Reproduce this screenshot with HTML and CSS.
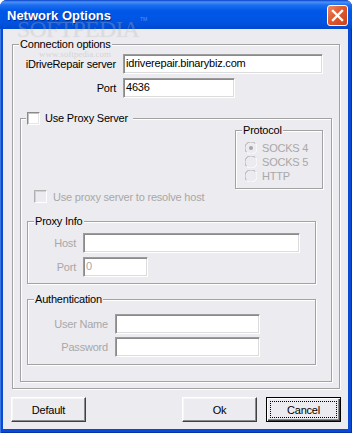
FILE: index.html
```html
<!DOCTYPE html>
<html lang="en">
<head>
  <meta charset="UTF-8">
  <title>Network Options</title>
  <link rel="stylesheet" href="styles.css">
</head>
<body>

  <div class="window">
    <!-- Title bar -->
    <div class="titlebar">
      <span class="title">Network Options</span>
      <span class="close-btn">
        <svg width="19" height="19" viewBox="0 0 19 19">
          <path d="M5 5 L14 14 M14 5 L5 14" stroke="#fff" stroke-width="2.4" stroke-linecap="square"/>
        </svg>
      </span>
    </div>

    <div class="client">
      <div class="group conn">
        <div class="group-title">Connection options</div>
        <div class="row server-row">
          <span class="lbl conn-lbl">iDriveRepair server</span>
          <div class="field server-field">idriverepair.binarybiz.com</div>
        </div>
        <div class="row port-row">
          <span class="lbl conn-lbl">Port</span>
          <div class="field port-field">4636</div>
        </div>

        <div class="group proxy">
          <div class="group-title proxy-title">
            <span class="check"></span>
            <span>Use Proxy Server</span>
          </div>

          <div class="group protocol">
            <div class="group-title">Protocol</div>
            <div class="radio-list">
              <div class="radio-row">
                <svg class="radio" width="12" height="12" viewBox="0 0 12 12">
                  <circle cx="6" cy="6" r="5.5" fill="#ecebef"/>
                  <path d="M1.6 10.4 A6 6 0 0 1 10.4 1.6" stroke="#a6a6a6" fill="none"/>
                  <path d="M10.4 1.6 A6 6 0 0 1 1.6 10.4" stroke="#fff" fill="none"/>
                  <circle cx="6" cy="6" r="2" fill="#a6a6a6"/>
                </svg>
                <span>SOCKS 4</span>
              </div>
              <div class="radio-row">
                <svg class="radio" width="12" height="12" viewBox="0 0 12 12">
                  <circle cx="6" cy="6" r="5.5" fill="#ecebef"/>
                  <path d="M1.6 10.4 A6 6 0 0 1 10.4 1.6" stroke="#a6a6a6" fill="none"/>
                  <path d="M10.4 1.6 A6 6 0 0 1 1.6 10.4" stroke="#fff" fill="none"/>
                </svg>
                <span>SOCKS 5</span>
              </div>
              <div class="radio-row">
                <svg class="radio" width="12" height="12" viewBox="0 0 12 12">
                  <circle cx="6" cy="6" r="5.5" fill="#ecebef"/>
                  <path d="M1.6 10.4 A6 6 0 0 1 10.4 1.6" stroke="#a6a6a6" fill="none"/>
                  <path d="M10.4 1.6 A6 6 0 0 1 1.6 10.4" stroke="#fff" fill="none"/>
                </svg>
                <span>HTTP</span>
              </div>
            </div>
          </div>

          <div class="resolve-row">
            <span class="check disabled"></span>
            <span class="dim">Use proxy server to resolve host</span>
          </div>

          <div class="group info">
            <div class="group-title">Proxy Info</div>
            <div class="row host-row">
              <span class="lbl info-lbl dim">Host</span>
              <div class="field host-field"></div>
            </div>
            <div class="row pport-row">
              <span class="lbl info-lbl dim">Port</span>
              <div class="field pport-field dim">0</div>
            </div>
          </div>

          <div class="group auth">
            <div class="group-title">Authentication</div>
            <div class="row user-row">
              <span class="lbl auth-lbl dim">User Name</span>
              <div class="field auth-field"></div>
            </div>
            <div class="row pass-row">
              <span class="lbl auth-lbl dim">Password</span>
              <div class="field auth-field"></div>
            </div>
          </div>
        </div>
      </div>

      <div class="buttons">
        <div class="btn">Default</div>
        <div class="btn ok-btn">Ok</div>
        <div class="btn cancel-btn"><span class="focus-rect">Cancel</span></div>
      </div>
    </div>

    <!-- watermark over the dialog -->
    <span class="wm-logo">SOFTPEDIA</span>
    <span class="wm-tm">TM</span>
    <span class="wm-url">www.softpedia.com</span>
  </div>

</body>
</html>
```

FILE: styles.css
```css
* {
  box-sizing: border-box;
  margin: 0;
  padding: 0;
}

body {
  width: 352px;
  height: 433px;
  overflow: hidden;
  background: #fff;
  font-family: "Liberation Sans", Arial, sans-serif;
  font-size: 11px;
  letter-spacing: -0.2px;
  color: #000;
}

.window {
  position: relative;
  width: 352px;
  height: 433px;
  background: #0a49d4;
  border-radius: 7px 7px 0 0;
  box-shadow: inset 1px 0 0 #3a78e4, inset -1px 0 0 #0732a8, inset 0 -1px 0 #0732a8;
}

/* Title bar */
.titlebar {
  height: 29px;
  display: flex;
  align-items: center;
  padding: 2px 4px 0 7px;
  border-radius: 7px 7px 0 0;
  background: linear-gradient(to bottom, #0a3fc8 0, #4a93f6 2px, #1d6ef0 5px, #0058e8 11px, #0054e2 22px, #0049d0 29px);
}

.title {
  flex: 1;
  color: #fff;
  font-weight: bold;
  font-size: 13px;
  letter-spacing: 0;
  text-shadow: 1px 1px 0 #0a2a8e;
}

.close-btn {
  width: 21px;
  height: 21px;
  margin-top: -1px;
  display: flex;
  align-items: center;
  justify-content: center;
  border: 1px solid #fff;
  border-radius: 3px;
  background: linear-gradient(135deg, #f08a62 0%, #e0582e 45%, #c8441c 100%);
}

/* Client area */
.client {
  margin: 0 4px 0 3px;
  height: 400px;
  background: #ecebef;
  padding: 15px 8px 0 9px;
}

.group {
  border: 1px solid #a2a2a2;
  box-shadow: inset 1px 1px 0 #fff, 1px 1px 0 #fff;
}

.group-title {
  width: fit-content;
  height: 13px;
  line-height: 13px;
  margin: -7px 0 0 6px;
  padding: 0 1px;
  background: #ecebef;
}

.dim {
  color: #a8a8a8;
}

.row {
  display: flex;
  align-items: center;
  height: 20px;
}

.lbl {
  text-align: right;
  margin-right: 7px;
  white-space: nowrap;
}

.field {
  height: 20px;
  line-height: 17px;
  padding: 0 2px;
  background: #fff;
  border: 1px solid;
  border-color: #9c9c9c #fff #fff #9c9c9c;
  box-shadow: inset 1px 1px 0 #8a8a8a, inset -1px -1px 0 #dcdcdc;
  white-space: nowrap;
}

/* Connection options */
.conn {
  height: 345px;
}

.conn-lbl {
  width: 103px;
}

.server-row {
  margin-top: 3px;
}

.server-field {
  width: 200px;
}

.port-row {
  margin-top: 4px;
}

.port-field {
  width: 112px;
}

/* Use Proxy Server */
.proxy {
  width: 312px;
  height: 264px;
  margin: 20px 0 0 7px;
}

.proxy-title {
  display: flex;
  align-items: center;
  gap: 5px;
  margin-left: 5px;
  padding: 0 5px 0 1px;
}

.check {
  width: 13px;
  height: 13px;
  background: #fff;
  border: 1px solid;
  border-color: #8a8a8a #fff #fff #8a8a8a;
  box-shadow: inset 1px 1px 0 #c4c4c4, inset -1px -1px 0 #e6e6e6;
}

.check.disabled {
  background: #ecebef;
  border-color: #b0b0b0 #fff #fff #b0b0b0;
  box-shadow: inset 1px 1px 0 #d2d2d2;
}

.protocol {
  width: 88px;
  height: 59px;
  margin: 5px 8px 0 auto;
}

.radio-list {
  padding-top: 4px;
}

.radio-row {
  display: flex;
  align-items: center;
  gap: 5px;
  height: 14px;
  padding-left: 9px;
  color: #a8a8a8;
}

.resolve-row {
  display: flex;
  align-items: center;
  gap: 6px;
  height: 13px;
  margin: 1px 0 0 13px;
}

/* Proxy Info */
.info {
  width: 289px;
  height: 63px;
  margin: 18px 0 0 6px;
}

.info-lbl {
  width: 48px;
}

.host-row {
  margin-top: 5px;
}

.host-field {
  width: 217px;
}

.pport-row {
  margin-top: 4px;
}

.pport-field {
  width: 65px;
}

/* Authentication */
.auth {
  width: 289px;
  height: 66px;
  margin: 15px 0 0 6px;
}

.auth-lbl {
  width: 80px;
}

.user-row {
  margin-top: 8px;
}

.pass-row {
  margin-top: 3px;
}

.auth-field {
  width: 145px;
}

/* Buttons */
.buttons {
  display: flex;
  margin: 8px -1px 0 -1px;
}

.btn {
  width: 75px;
  height: 25px;
  display: flex;
  align-items: center;
  justify-content: center;
  background: #ecebef;
  border: 1px solid;
  border-color: #fff #404040 #404040 #fff;
  box-shadow: inset -1px -1px 0 #8c8c8c, inset 1px 1px 0 #f6f6f6;
}

.ok-btn {
  margin-left: auto;
}

.cancel-btn {
  margin-left: 9px;
  border-color: #000;
  box-shadow: inset 1px 1px 0 #fff, inset -1px -1px 0 #404040, inset -2px -2px 0 #8c8c8c;
}

.focus-rect {
  width: 67px;
  height: 17px;
  display: flex;
  align-items: center;
  justify-content: center;
  border: 1px dotted #000;
}

/* Watermark */
.wm-logo {
  position: absolute;
  left: 17px;
  top: 21px;
  font-family: "Liberation Serif", serif;
  font-size: 24px;
  line-height: 16px;
  letter-spacing: -0.8px;
  color: rgba(255, 255, 255, 0.22);
  text-shadow: 0 0 1px rgba(0, 0, 0, 0.12);
  pointer-events: none;
}

.wm-tm {
  position: absolute;
  left: 140px;
  top: 17px;
  font-size: 5px;
  line-height: 5px;
  letter-spacing: 0;
  color: rgba(255, 255, 255, 0.35);
}

.wm-url {
  position: absolute;
  left: 39px;
  top: 50px;
  font-family: "Liberation Serif", serif;
  font-size: 9px;
  line-height: 8px;
  letter-spacing: 0;
  color: rgba(150, 150, 150, 0.3);
}
```
